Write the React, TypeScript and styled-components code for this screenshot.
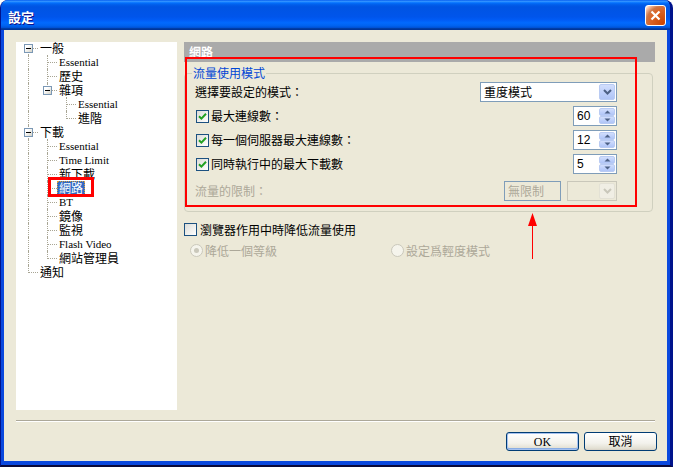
import React from "react";
import styled, { createGlobalStyle, css } from "styled-components";

const GlobalStyle = createGlobalStyle`
  html, body { margin: 0; padding: 0; background: #ffffff; }
  body {
    font-family: "Noto Sans CJK TC", "Liberation Sans", sans-serif;
    font-size: 12px;
    color: #000;
  }
  * { box-sizing: border-box; }
`;

const UI_FONT = `"Noto Sans CJK TC", "Liberation Sans", sans-serif`;
const SERIF_FONT = `"Liberation Serif", "Noto Sans CJK TC", serif`;

const Window = styled.div`
  position: relative;
  width: 673px;
  height: 467px;
  display: flex;
  flex-direction: column;
  background: #0a48de;
  border-left: 1px solid #00138c;
  border-right: 3px solid #00138c;
  border-bottom: 2px solid #0a0a3a;
  border-radius: 8px 8px 0 0;
  overflow: hidden;
`;

const TitleBar = styled.div`
  height: 30px;
  flex: none;
  display: flex;
  align-items: center;
  justify-content: space-between;
  padding: 3px 4px 0 7px;
  background: linear-gradient(
    to bottom,
    #0058ee 0%,
    #3593ff 4%,
    #288eff 6%,
    #127dff 8%,
    #036ffc 10%,
    #0262ee 14%,
    #0057e5 20%,
    #0054e3 24%,
    #0055eb 56%,
    #005bf5 66%,
    #026afe 76%,
    #0062ef 86%,
    #0052d6 92%,
    #0040ab 94%,
    #003092 100%
  );
`;

const TitleText = styled.span`
  color: #fff;
  font-family: ${UI_FONT};
  font-weight: bold;
  font-size: 13px;
  line-height: 16px;
  text-shadow: 1px 1px 0 #0f1089;
`;

const CloseButton = styled.div`
  width: 21px;
  height: 21px;
  margin-top: -3px;
  border: 1px solid #fff;
  border-radius: 3px;
  display: flex;
  align-items: center;
  justify-content: center;
  background: radial-gradient(
    circle at 90% 90%,
    #cc4600 0%,
    #dc6527 55%,
    #cd7546 70%,
    #ffccb2 90%,
    #ffffff 100%
  );
`;

const Frame = styled.div`
  flex: 1;
  display: flex;
  padding: 0 3px 4px 3px;
  min-height: 0;
`;

const Client = styled.div`
  flex: 1;
  background: #ece9d8;
  display: flex;
  flex-direction: column;
  padding: 12px 10px 0 12px;
`;

const MainRow = styled.div`
  display: flex;
  gap: 7px;
  height: 368px;
`;

const TreePanel = styled.div`
  width: 161px;
  flex: none;
  background: #fff;
  padding-left: 3px;
`;

const TreeList = styled.div`
  margin-top: -1px;
  display: flex;
  flex-direction: column;
`;

const TreeRow = styled.div`
  display: flex;
  height: 14px;
`;

type GuideKind = "none" | "pass" | "tee" | "end" | "first";

const lineColor = "#a8a594";

const GuideCell = styled.div<{ $kind: GuideKind }>`
  position: relative;
  width: 19px;
  height: 14px;
  flex: none;

  ${({ $kind }) =>
    $kind !== "none" &&
    css`
      &::before {
        content: "";
        position: absolute;
        left: 9px;
        top: ${$kind === "first" ? "7px" : "0"};
        height: ${$kind === "end" ? "8px" : $kind === "first" ? "7px" : "14px"};
        border-left: 1px dotted ${lineColor};
      }
    `}

  ${({ $kind }) =>
    ($kind === "tee" || $kind === "end" || $kind === "first") &&
    css`
      &::after {
        content: "";
        position: absolute;
        left: 10px;
        top: 7px;
        width: 9px;
        border-top: 1px dotted ${lineColor};
      }
    `}
`;

const ExpandBox = styled.div`
  position: absolute;
  left: 5px;
  top: 3px;
  width: 9px;
  height: 9px;
  z-index: 1;
  border: 1px solid #7b98b5;
  background: linear-gradient(135deg, #ffffff 30%, #d4d2c6 100%);
  display: flex;
  align-items: center;
  justify-content: center;

  &::after {
    content: "";
    width: 5px;
    height: 1px;
    background: #000;
  }
`;

const TreeLabel = styled.span<{ $latin?: boolean; $selected?: boolean }>`
  height: 14px;
  line-height: 14px;
  padding: 0 2px;
  white-space: nowrap;
  font-family: ${({ $latin }) => ($latin ? SERIF_FONT : UI_FONT)};
  font-size: ${({ $latin }) => ($latin ? "11px" : "12px")};
  ${({ $selected }) =>
    $selected &&
    css`
      background: #316ac5;
      color: #fff;
      outline: 1px dotted #d8a040;
      outline-offset: -1px;
    `}
`;

const RightPanel = styled.div`
  flex: 1;
  display: flex;
  flex-direction: column;
  min-width: 0;
`;

const PanelHeader = styled.div`
  height: 20px;
  margin-right: 2px;
  padding-left: 5px;
  background: #aaaaaa;
  color: #fff;
  font-weight: bold;
  font-size: 12px;
  line-height: 20px;
`;

const GroupBox = styled.div`
  position: relative;
  margin-top: 11px;
  margin-right: 4px;
  border: 1px solid #d0d0bf;
  border-radius: 4px;
  padding: 8px 35px 10px 10px;
  display: flex;
  flex-direction: column;
  gap: 4px;
`;

const GroupTitle = styled.span`
  position: absolute;
  top: -8px;
  left: 7px;
  padding: 0 1px;
  background: #ece9d8;
  color: #0046d5;
  line-height: 14px;
`;

const FormRow = styled.div<{ $extraGap?: number }>`
  display: flex;
  align-items: center;
  justify-content: space-between;
  height: 20px;
  margin-top: ${({ $extraGap }) => ($extraGap ? `${$extraGap}px` : "0")};
`;

const LabelText = styled.span<{ $disabled?: boolean }>`
  line-height: 14px;
  white-space: nowrap;
  color: ${({ $disabled }) => ($disabled ? "#aca899" : "#000")};
`;

const CheckLine = styled.label<{ $indent?: number }>`
  display: flex;
  align-items: center;
  gap: 2px;
  margin-left: ${({ $indent }) => ($indent ? `${$indent}px` : "0")};
`;

const CheckBoxBox = styled.span`
  width: 13px;
  height: 13px;
  flex: none;
  border: 1px solid #1c5180;
  background: linear-gradient(135deg, #dcdcd7 0%, #ffffff 100%);
  display: flex;
  align-items: center;
  justify-content: center;
`;

const Controls = styled.div`
  display: flex;
  gap: 6px;
`;

const Combo = styled.div<{ $width: number; $disabled?: boolean }>`
  width: ${({ $width }) => $width}px;
  height: 20px;
  display: flex;
  align-items: center;
  padding: 1px;
  border: 1px solid ${({ $disabled }) => ($disabled ? "#c9c7ba" : "#7f9db9")};
  background: ${({ $disabled }) => ($disabled ? "#ece9d8" : "#fff")};
`;

const ComboText = styled.span`
  flex: 1;
  padding-left: 2px;
  line-height: 16px;
`;

const DropButton = styled.span<{ $disabled?: boolean }>`
  width: 16px;
  height: 16px;
  flex: none;
  display: flex;
  align-items: center;
  justify-content: center;
  border-radius: 2px;
  ${({ $disabled }) =>
    $disabled
      ? css`
          border: 1px solid #e3e1d5;
          background: #f0eee4;
        `
      : css`
          border: 1px solid #b9cbf3;
          background: linear-gradient(to bottom, #d2defc 0%, #bccefa 60%, #b0c5f6 100%);
        `}
`;

const Spinner = styled.div`
  width: 44px;
  height: 20px;
  display: flex;
  padding: 1px;
  border: 1px solid #7f9db9;
  background: #fff;
`;

const SpinValue = styled.span`
  flex: 1;
  padding-left: 2px;
  font-family: "Liberation Sans", sans-serif;
  font-size: 12px;
  line-height: 16px;
`;

const SpinButtons = styled.span`
  width: 16px;
  flex: none;
  display: flex;
  flex-direction: column;
`;

const SpinHalf = styled.span`
  flex: 1;
  display: flex;
  align-items: center;
  justify-content: center;
  border: 1px solid #b9cbf3;
  border-radius: 2px;
  background: linear-gradient(to bottom, #d2defc 0%, #bccefa 60%, #b0c5f6 100%);
`;

const DisabledBox = styled.div`
  width: 57px;
  height: 20px;
  padding-left: 3px;
  border: 1px solid #7f9db9;
  background: #ece9d8;
  color: #aca899;
  line-height: 18px;
`;

const StandaloneCheck = styled(CheckLine)`
  margin-top: 11px;
  height: 13px;
  gap: 3px;
`;

const RadioRow = styled.div`
  display: flex;
  align-items: center;
  margin-top: 8px;
  padding-left: 6px;
  height: 13px;
`;

const RadioItem = styled.span<{ $width?: number }>`
  display: flex;
  align-items: center;
  gap: 2px;
  width: ${({ $width }) => ($width ? `${$width}px` : "auto")};
  color: #aca899;
  line-height: 14px;
`;

const RadioCircle = styled.span<{ $checked?: boolean }>`
  width: 13px;
  height: 13px;
  flex: none;
  border-radius: 50%;
  border: 1px solid #cac8bb;
  background: #f5f4ec;
  display: flex;
  align-items: center;
  justify-content: center;

  &::after {
    content: "";
    width: 5px;
    height: 5px;
    border-radius: 50%;
    background: ${({ $checked }) => ($checked ? "#cac8bb" : "transparent")};
  }
`;

const Separator = styled.div`
  margin-top: 10px;
  margin-right: 2px;
  border-top: 1px solid #aca899;
  border-bottom: 1px solid #fff;
`;

const ButtonBar = styled.div`
  display: flex;
  justify-content: flex-end;
  gap: 5px;
  margin-top: 10px;
`;

const PushButton = styled.div<{ $default?: boolean }>`
  width: 73px;
  height: 19px;
  border: 1px solid #003c74;
  border-radius: 3px;
  background: linear-gradient(to bottom, #ffffff 0%, #f3f2ec 60%, #e3e0d3 90%, #d6d0c5 100%);
  display: flex;
  align-items: center;
  justify-content: center;
  font-family: ${SERIF_FONT};
  font-size: 12px;
  line-height: 16px;
  box-shadow: ${({ $default }) =>
    $default ? "inset 0 0 0 1px #a5c1ef, inset 0 -1px 0 1px #89ade4" : "none"};
`;

const Annotation = styled.div<{ $left: number; $top: number; $w: number; $h: number; $thick: number }>`
  position: absolute;
  left: ${({ $left }) => $left}px;
  top: ${({ $top }) => $top}px;
  width: ${({ $w }) => $w}px;
  height: ${({ $h }) => $h}px;
  border: ${({ $thick }) => $thick}px solid #ff0000;
  pointer-events: none;
  z-index: 5;
`;

const ArrowSvg = styled.svg`
  position: absolute;
  left: 527px;
  top: 213px;
  z-index: 5;
`;

const Chevron = ({ up, color = "#4d6185" }: { up?: boolean; color?: string }) => (
  <svg width="9" height="6" viewBox="0 0 9 6">
    <path
      d={up ? "M1 5 L4.5 1.5 L8 5" : "M1 1 L4.5 4.5 L8 1"}
      fill="none"
      stroke={color}
      strokeWidth="2"
    />
  </svg>
);

const SmallArrow = ({ up }: { up?: boolean }) => (
  <svg width="7" height="4" viewBox="0 0 7 4">
    <path d={up ? "M0.5 3.5 L3.5 0.5 L6.5 3.5 Z" : "M0.5 0.5 L3.5 3.5 L6.5 0.5 Z"} fill="#4d6185" />
  </svg>
);

const CheckMark = () => (
  <svg width="9" height="9" viewBox="0 0 9 9">
    <path d="M1 4.2 L3.4 6.6 L8 1.8" fill="none" stroke="#21a121" strokeWidth="2" />
  </svg>
);

const CheckBox = ({ checked, indent }: { checked?: boolean; indent?: number }) => (
  <CheckBoxBox style={indent ? { marginLeft: indent } : undefined}>
    {checked && <CheckMark />}
  </CheckBoxBox>
);

type TreeItem = {
  label: string;
  guides: GuideKind[];
  box?: boolean;
  latin?: boolean;
  selected?: boolean;
};

const tree: TreeItem[] = [
  { label: "一般", guides: ["first"], box: true },
  { label: "Essential", guides: ["pass", "tee"], latin: true },
  { label: "歷史", guides: ["pass", "tee"] },
  { label: "雜項", guides: ["pass", "end"], box: true },
  { label: "Essential", guides: ["pass", "none", "tee"], latin: true },
  { label: "進階", guides: ["pass", "none", "end"] },
  { label: "下載", guides: ["tee"], box: true },
  { label: "Essential", guides: ["pass", "tee"], latin: true },
  { label: "Time Limit", guides: ["pass", "tee"], latin: true },
  { label: "新下載", guides: ["pass", "tee"] },
  { label: "網路", guides: ["pass", "tee"], selected: true },
  { label: "BT", guides: ["pass", "tee"], latin: true },
  { label: "鏡像", guides: ["pass", "tee"] },
  { label: "監視", guides: ["pass", "tee"] },
  { label: "Flash Video", guides: ["pass", "tee"], latin: true },
  { label: "網站管理員", guides: ["pass", "end"] },
  { label: "通知", guides: ["end"] },
];

const Spin = ({ value }: { value: string }) => (
  <Spinner>
    <SpinValue>{value}</SpinValue>
    <SpinButtons>
      <SpinHalf>
        <SmallArrow up />
      </SpinHalf>
      <SpinHalf>
        <SmallArrow />
      </SpinHalf>
    </SpinButtons>
  </Spinner>
);

export default function App() {
  return (
    <>
      <GlobalStyle />
      <Window>
        <TitleBar>
          <TitleText>設定</TitleText>
          <CloseButton>
            <svg width="11" height="11" viewBox="0 0 11 11">
              <path d="M1.5 1.5 L9.5 9.5 M9.5 1.5 L1.5 9.5" stroke="#fff" strokeWidth="2.2" />
            </svg>
          </CloseButton>
        </TitleBar>
        <Frame>
          <Client>
            <MainRow>
              <TreePanel>
                <TreeList>
                  {tree.map((item, i) => (
                    <TreeRow key={i}>
                      {item.guides.map((g, j) => (
                        <GuideCell key={j} $kind={g}>
                          {item.box && j === item.guides.length - 1 && <ExpandBox />}
                        </GuideCell>
                      ))}
                      <TreeLabel $latin={item.latin} $selected={item.selected}>
                        {item.label}
                      </TreeLabel>
                    </TreeRow>
                  ))}
                </TreeList>
              </TreePanel>
              <RightPanel>
                <PanelHeader>網路</PanelHeader>
                <GroupBox>
                  <GroupTitle>流量使用模式</GroupTitle>
                  <FormRow>
                    <LabelText>選擇要設定的模式：</LabelText>
                    <Combo $width={137}>
                      <ComboText>重度模式</ComboText>
                      <DropButton>
                        <Chevron />
                      </DropButton>
                    </Combo>
                  </FormRow>
                  <FormRow>
                    <CheckLine>
                      <CheckBox checked indent={1} />
                      <LabelText>最大連線數：</LabelText>
                    </CheckLine>
                    <Spin value="60" />
                  </FormRow>
                  <FormRow>
                    <CheckLine>
                      <CheckBox checked indent={1} />
                      <LabelText>每一個伺服器最大連線數：</LabelText>
                    </CheckLine>
                    <Spin value="12" />
                  </FormRow>
                  <FormRow>
                    <CheckLine>
                      <CheckBox checked indent={1} />
                      <LabelText>同時執行中的最大下載數</LabelText>
                    </CheckLine>
                    <Spin value="5" />
                  </FormRow>
                  <FormRow $extraGap={3}>
                    <LabelText $disabled>流量的限制：</LabelText>
                    <Controls>
                      <DisabledBox>無限制</DisabledBox>
                      <Combo $width={50} $disabled>
                        <ComboText />
                        <DropButton $disabled>
                          <Chevron color="#c9c7ba" />
                        </DropButton>
                      </Combo>
                    </Controls>
                  </FormRow>
                </GroupBox>
                <StandaloneCheck>
                  <CheckBox />
                  <LabelText>瀏覽器作用中時降低流量使用</LabelText>
                </StandaloneCheck>
                <RadioRow>
                  <RadioItem $width={201}>
                    <RadioCircle $checked />
                    降低一個等級
                  </RadioItem>
                  <RadioItem>
                    <RadioCircle />
                    設定爲輕度模式
                  </RadioItem>
                </RadioRow>
              </RightPanel>
            </MainRow>
            <Separator />
            <ButtonBar>
              <PushButton $default>OK</PushButton>
              <PushButton>取消</PushButton>
            </ButtonBar>
          </Client>
        </Frame>
        <Annotation $left={47} $top={177} $w={46} $h={20} $thick={3} />
        <Annotation $left={184} $top={57} $w={452} $h={150} $thick={2} />
        <ArrowSvg width="10" height="46" viewBox="0 0 10 46">
          <polygon points="4.5,0 9,13 0,13" fill="#ff0000" />
          <rect x="4" y="12" width="1" height="34" fill="#ff0000" />
        </ArrowSvg>
      </Window>
    </>
  );
}
